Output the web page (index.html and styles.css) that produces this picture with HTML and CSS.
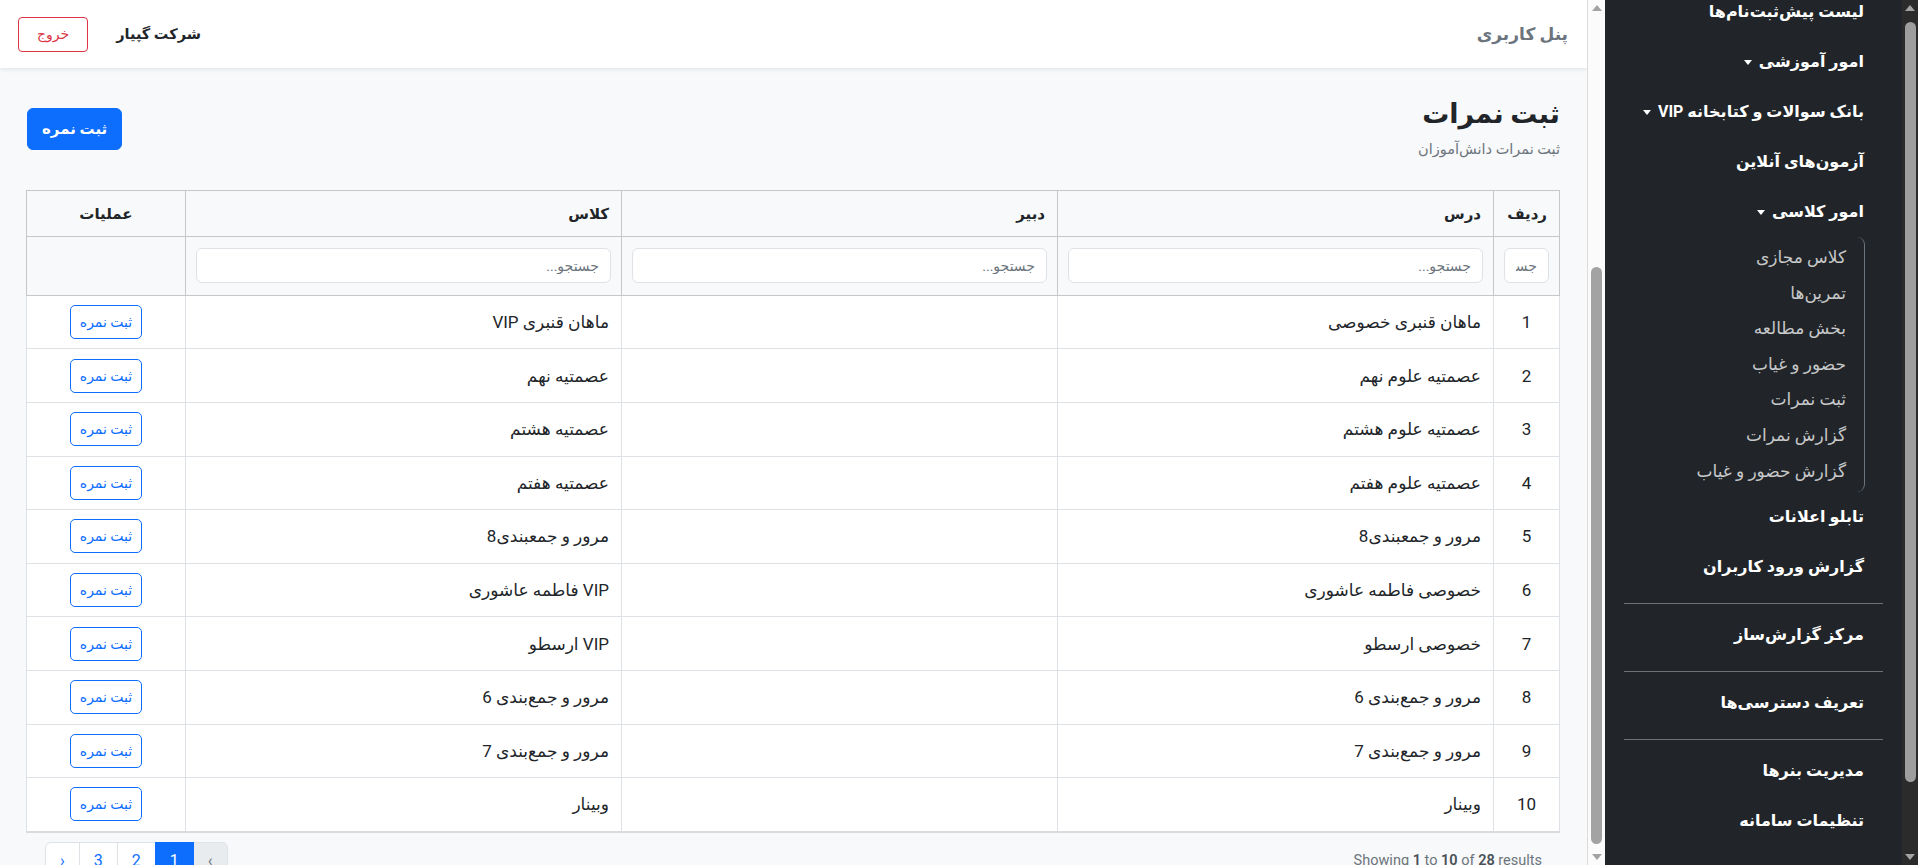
FILE: index.html
```html
<!DOCTYPE html>
<html lang="fa" dir="rtl">
<head>
<meta charset="utf-8">
<title>ثبت نمرات</title>
<link rel="stylesheet" href="styles.css">
</head>
<body>
<div class="app">
  <div class="scrollbar dark-sb" aria-hidden="true">
    <span class="sb-arrow up"></span>
    <div class="sb-track"><div class="sb-thumb"></div></div>
    <span class="sb-arrow down"></span>
  </div>

  <aside class="sidebar">
    <nav class="side-nav">
      <a class="side-link" href="#">لیست پیش‌ثبت‌نام‌ها</a>
      <a class="side-link caret" href="#">امور آموزشی</a>
      <a class="side-link caret" href="#">بانک سوالات و کتابخانه VIP</a>
      <a class="side-link" href="#">آزمون‌های آنلاین</a>
      <a class="side-link caret" href="#">امور کلاسی</a>
      <div class="submenu">
        <a class="sub-link" href="#">کلاس مجازی</a>
        <a class="sub-link" href="#">تمرین‌ها</a>
        <a class="sub-link" href="#">بخش مطالعه</a>
        <a class="sub-link" href="#">حضور و غیاب</a>
        <a class="sub-link" href="#">ثبت نمرات</a>
        <a class="sub-link" href="#">گزارش نمرات</a>
        <a class="sub-link" href="#">گزارش حضور و غیاب</a>
      </div>
      <a class="side-link" href="#">تابلو اعلانات</a>
      <a class="side-link" href="#">گزارش ورود کاربران</a>
      <hr class="side-divider">
      <a class="side-link" href="#">مرکز گزارش‌ساز</a>
      <hr class="side-divider">
      <a class="side-link" href="#">تعریف دسترسی‌ها</a>
      <hr class="side-divider">
      <a class="side-link" href="#">مدیریت بنرها</a>
      <a class="side-link" href="#">تنظیمات سامانه</a>
    </nav>
  </aside>

  <div class="scrollbar light-sb" aria-hidden="true">
    <span class="sb-arrow up"></span>
    <div class="sb-track"><div class="sb-thumb"></div></div>
    <span class="sb-arrow down"></span>
  </div>

  <div class="main">
    <header class="topbar">
      <div class="panel-title">پنل کاربری</div>
      <div class="topbar-left">
        <span class="company">شرکت گپیار</span>
        <button class="btn-logout" type="button">خروج</button>
      </div>
    </header>

    <section class="content">
      <div class="page-head">
        <div class="page-title-block">
          <h1 class="page-title">ثبت نمرات</h1>
          <p class="page-sub">ثبت نمرات دانش‌آموزان</p>
        </div>
        <button class="btn-primary" type="button">ثبت نمره</button>
      </div>

      <table class="grid-table">
        <colgroup>
          <col class="c-idx">
          <col class="c-wide">
          <col class="c-wide">
          <col class="c-wide">
          <col class="c-act">
        </colgroup>
        <thead>
          <tr class="head-row">
            <th>ردیف</th>
            <th>درس</th>
            <th>دبیر</th>
            <th>کلاس</th>
            <th class="center">عملیات</th>
          </tr>
          <tr class="filter-row">
            <td><input class="filter-input" type="text" placeholder="جستجو..."></td>
            <td><input class="filter-input" type="text" placeholder="جستجو..."></td>
            <td><input class="filter-input" type="text" placeholder="جستجو..."></td>
            <td><input class="filter-input" type="text" placeholder="جستجو..."></td>
            <td></td>
          </tr>
        </thead>
        <tbody>
          <tr><td class="center">1</td><td>ماهان قنبری خصوصی</td><td></td><td>ماهان قنبری VIP</td><td class="center"><button class="btn-outline" type="button">ثبت نمره</button></td></tr>
          <tr><td class="center">2</td><td>عصمتیه علوم نهم</td><td></td><td>عصمتیه نهم</td><td class="center"><button class="btn-outline" type="button">ثبت نمره</button></td></tr>
          <tr><td class="center">3</td><td>عصمتیه علوم هشتم</td><td></td><td>عصمتیه هشتم</td><td class="center"><button class="btn-outline" type="button">ثبت نمره</button></td></tr>
          <tr><td class="center">4</td><td>عصمتیه علوم هفتم</td><td></td><td>عصمتیه هفتم</td><td class="center"><button class="btn-outline" type="button">ثبت نمره</button></td></tr>
          <tr><td class="center">5</td><td>مرور و جمعبندی8</td><td></td><td>مرور و جمعبندی8</td><td class="center"><button class="btn-outline" type="button">ثبت نمره</button></td></tr>
          <tr><td class="center">6</td><td>خصوصی فاطمه عاشوری</td><td></td><td>VIP فاطمه عاشوری</td><td class="center"><button class="btn-outline" type="button">ثبت نمره</button></td></tr>
          <tr><td class="center">7</td><td>خصوصی ارسطو</td><td></td><td>VIP ارسطو</td><td class="center"><button class="btn-outline" type="button">ثبت نمره</button></td></tr>
          <tr><td class="center">8</td><td>مرور و جمع‌بندی 6</td><td></td><td>مرور و جمع‌بندی 6</td><td class="center"><button class="btn-outline" type="button">ثبت نمره</button></td></tr>
          <tr><td class="center">9</td><td>مرور و جمع‌بندی 7</td><td></td><td>مرور و جمع‌بندی 7</td><td class="center"><button class="btn-outline" type="button">ثبت نمره</button></td></tr>
          <tr><td class="center">10</td><td>وبینار</td><td></td><td>وبینار</td><td class="center"><button class="btn-outline" type="button">ثبت نمره</button></td></tr>
        </tbody>
      </table>

      <div class="pager-row">
        <p class="pager-info" dir="ltr">Showing <span class="num">1</span> to <span class="num">10</span> of <span class="num">28</span> results</p>
        <ul class="pagination">
          <li class="page-item disabled"><span class="page-link">›</span></li>
          <li class="page-item active"><span class="page-link">1</span></li>
          <li class="page-item"><a class="page-link" href="#">2</a></li>
          <li class="page-item"><a class="page-link" href="#">3</a></li>
          <li class="page-item"><a class="page-link" href="#">‹</a></li>
        </ul>
      </div>
    </section>
  </div>
</div>
<script src="script.js"></script>
</body>
</html>
```

FILE: styles.css
```css
* { box-sizing: border-box; }

html, body {
  margin: 0;
  height: 100%;
}

body {
  font-family: Roboto, "DejaVu Sans", sans-serif;
  font-size: 16px;
  color: #212529;
  background: #f8f9fa;
  overflow: hidden;
}

.app {
  display: flex;
  height: 100vh;
}

/* ---------- Scrollbars (static rendering of the window's scrollbars) ---------- */
.scrollbar {
  flex: none;
  display: flex;
  flex-direction: column;
  align-items: center;
  height: 100vh;
}

.sb-track {
  flex: 1;
  width: 100%;
  display: flex;
  flex-direction: column;
  align-items: center;
}

.sb-thumb {
  border-radius: 6px;
}

.sb-arrow {
  flex: none;
  width: 0;
  height: 0;
  margin: 5px 0;
  border-left: 5px solid transparent;
  border-right: 5px solid transparent;
}

.sb-arrow.up { border-bottom: 6px solid #a3a3a3; }
.sb-arrow.down { border-top: 6px solid #a3a3a3; }

.light-sb {
  width: 18px;
  background: #fbfbfb;
  border-left: 1px solid #dcdcdc;
}

.light-sb .sb-thumb {
  width: 11px;
  height: 577px;
  margin-top: 251px;
  background: #a3a3a3;
}

.dark-sb {
  width: 16px;
  background: #2b2b2b;
}

.dark-sb .sb-thumb {
  width: 11px;
  height: 760px;
  margin-top: 6px;
  background: #9e9e9e;
}

/* ---------- Sidebar ---------- */
.sidebar {
  width: 297px;
  flex: none;
  height: 100vh;
  background: #212529;
  overflow: hidden;
}

.side-nav {
  display: flex;
  flex-direction: column;
  padding-bottom: 90px;
}

.side-link {
  display: block;
  padding: 13px 38px 13px 0;
  line-height: 24px;
  font-size: 16px;
  font-weight: 700;
  color: #fff;
  text-decoration: none;
}

.caret::after {
  content: "";
  display: inline-block;
  vertical-align: middle;
  margin-right: 7px;
  border-top: 5px solid #fff;
  border-left: 4.5px solid transparent;
  border-right: 4.5px solid transparent;
}

.submenu {
  display: flex;
  flex-direction: column;
  margin-right: 37px;
  padding: 3px 0;
  border-right: 1px solid #6c757d;
  border-radius: 0 8px 8px 0;
}

.sub-link {
  display: block;
  padding: 7px 18px 7px 0;
  line-height: 21.6px;
  font-size: 17px;
  color: rgba(255, 255, 255, 0.75);
  text-decoration: none;
}

.side-divider {
  border: 0;
  border-top: 1px solid rgba(255, 255, 255, 0.35);
  margin: 11px 19px 6px 19px;
}

/* ---------- Main ---------- */
.main {
  flex: 1;
  min-width: 0;
  height: 100vh;
  overflow: hidden;
  background: #f8f9fa;
}

.topbar {
  height: 68px;
  display: flex;
  align-items: center;
  justify-content: space-between;
  padding: 0 19px 0 18px;
  background: #fff;
  box-shadow: 0 2px 4px rgba(0, 0, 0, 0.075);
  position: relative;
  z-index: 2;
}

.panel-title {
  font-size: 17px;
  font-weight: 700;
  color: #6c757d;
}

.topbar-left {
  display: flex;
  align-items: center;
  gap: 28px;
}

.company {
  font-size: 14.5px;
  font-weight: 700;
  color: #212529;
}

.btn-logout {
  height: 35px;
  padding: 0 18px;
  font-family: inherit;
  font-size: 14px;
  color: #dc3545;
  background: transparent;
  border: 1px solid #dc3545;
  border-radius: 4px;
}

.content {
  padding: 29px 27px 30px 27px;
}

.page-head {
  display: flex;
  align-items: center;
  justify-content: space-between;
  margin-bottom: 30px;
}

.page-title {
  margin: 0;
  font-size: 27px;
  line-height: 34px;
  font-weight: 700;
}

.page-sub {
  margin: 8px 0 0;
  font-size: 14.5px;
  line-height: 21px;
  color: #6c757d;
}

.btn-primary {
  height: 42px;
  padding: 0 14px;
  font-family: inherit;
  font-size: 15px;
  font-weight: 700;
  color: #fff;
  background: #0d6efd;
  border: 1px solid #0d6efd;
  border-radius: 6px;
}

/* ---------- Table ---------- */
.grid-table {
  width: 100%;
  table-layout: fixed;
  border-collapse: collapse;
  background: #fff;
  border-bottom: 2px solid #d9dbdd;
}

.c-idx { width: 66px; }
.c-wide { width: 436px; }
.c-act { width: 159px; }

.grid-table th,
.grid-table td {
  border: 1px solid #dee2e6;
  text-align: right;
  vertical-align: middle;
}

.grid-table thead th,
.grid-table thead td {
  background: #f8f9fa;
  border-color: #c6c7c8;
}

.head-row th {
  padding: 11.5px 12px;
  line-height: 22px;
  font-size: 15px;
  font-weight: 700;
}

.filter-row td {
  padding: 11.4px 10px;
}

.filter-input {
  display: block;
  width: 100%;
  height: 35px;
  padding: 0 11px;
  font-family: inherit;
  font-size: 14px;
  color: #212529;
  background: #fff;
  border: 1px solid #dee2e6;
  border-radius: 6px;
}

.filter-input::placeholder {
  color: #6c757d;
}

.grid-table tbody td {
  padding: 9.3px 12px;
  line-height: 24px;
  font-size: 17px;
}

.grid-table .center {
  text-align: center;
}

.btn-outline {
  height: 34px;
  padding: 0 9px;
  font-family: inherit;
  font-size: 14px;
  color: #0d6efd;
  background: #fff;
  border: 1px solid #0d6efd;
  border-radius: 5px;
}

/* ---------- Pagination ---------- */
.pager-row {
  display: flex;
  align-items: center;
  justify-content: space-between;
  margin-top: 9px;
  padding: 0 18px;
}

.pager-info {
  margin: 0;
  font-size: 14.5px;
  color: #6c757d;
}

.pager-info .num {
  font-weight: 600;
  color: #495057;
}

.pagination {
  display: flex;
  margin: 0;
  padding: 0;
  list-style: none;
}

.page-link {
  display: block;
  padding: 6px 14px;
  line-height: 24px;
  font-size: 16px;
  color: #0d6efd;
  text-decoration: none;
  background: #fff;
  border: 1px solid #dee2e6;
  margin-left: -1px;
}

.page-item:first-child .page-link {
  border-radius: 0 6px 6px 0;
}

.page-item:last-child .page-link {
  border-radius: 6px 0 0 6px;
  margin-left: 0;
}

.page-item.active .page-link {
  color: #fff;
  background: #0d6efd;
  border-color: #0d6efd;
  position: relative;
  z-index: 1;
}

.page-item.disabled .page-link {
  color: #6c757d;
  background: #e9ecef;
}
```

FILE: script.js
```js
document.querySelector('.sidebar').scrollTop = 13;
```
